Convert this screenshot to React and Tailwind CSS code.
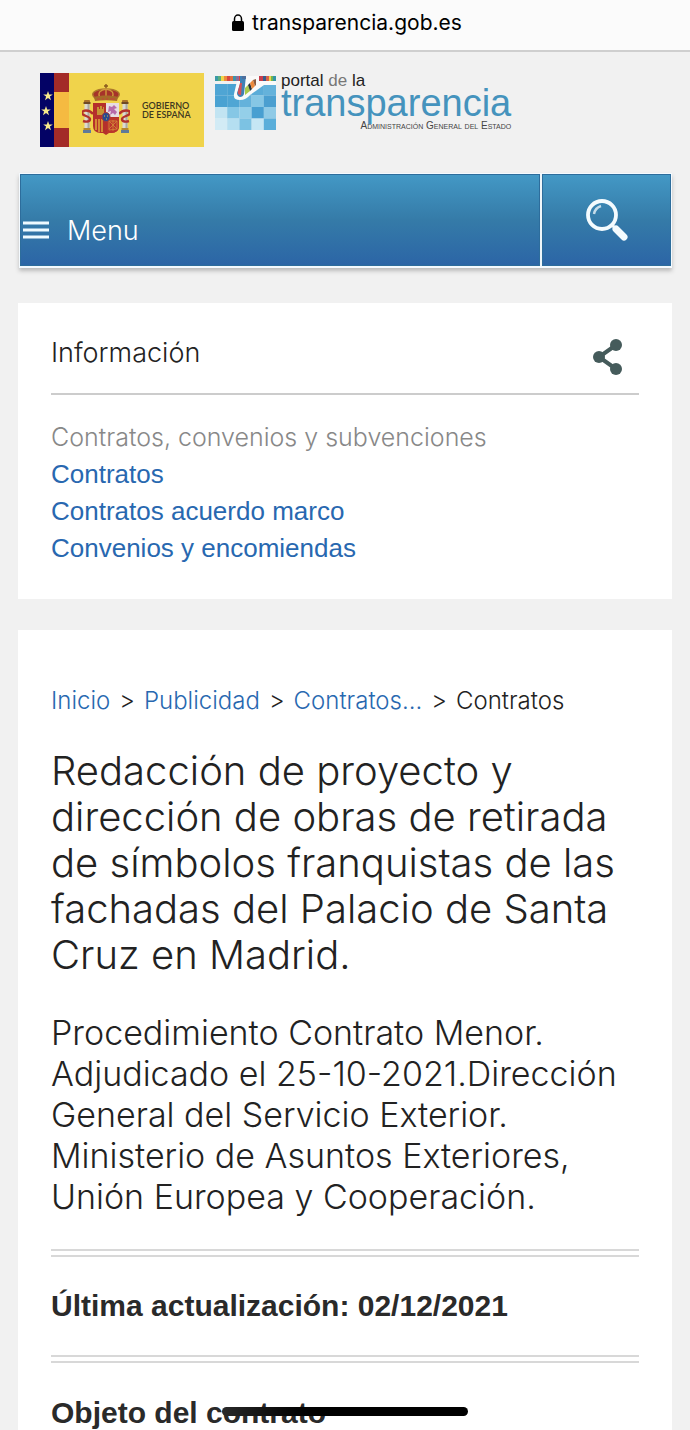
const relatedLinks = ["Contratos", "Contratos acuerdo marco", "Convenios y encomiendas"]

const breadcrumb = ["Inicio", "Publicidad", "Contratos..."]

const tiles = [
  ["#4fa5d4", "#4aa2d2", "#5aacd8", "#5aacd8", "#64b2db"],
  ["#4aa2d2", "#50a6d4", "#64b2db", "#86c7e5", "#4b9fd0"],
  ["#c2e4f2", "#86c7e5", "#94cfe9", "#489fd1", "#8fcae6"],
  ["#d2ebf5", "#b5dff1", "#7cc2e3", "#c5e6f4", "#5aaeda"],
]

const stripe = ["#3a9aa6", "#5cae7c", "#f0d548", "#ee8a3c", "#d8473f", "#e0703f", "#3d93a8", "#8a6d9b", "#d8473f"]

const Star = ({ x, y }) => (
  <path
    transform={`translate(${x} ${y})`}
    fill="#f8e98c"
    d="M0-5 1.2-1.6 4.8-1.6 1.9.6 3 4.2 0 2-3 4.2-1.9.6-4.8-1.6-1.2-1.6z"
  />
)

const CoatOfArms = () => (
  <svg viewBox="0 0 48 52" className="h-[52px] w-12" aria-hidden="true">
    {/* columns */}
    {[2, 40].map((x) => (
      <g key={x}>
        <rect x={x} y="16" width="6" height="3" rx="1" fill="#a8722a" />
        <rect x={x - 0.5} y="18" width="7" height="2" fill="#6f4a26" />
        <rect x={x + 0.5} y="20" width="5" height="24" fill="#dcdad0" />
        <rect x={x + 3.5} y="20" width="2" height="24" fill="#aaaaa4" />
        <rect x={x - 0.5} y="44" width="7" height="2" fill="#b5872e" />
        <rect x={x - 1} y="46" width="8" height="3" fill="#60799a" />
      </g>
    ))}
    {/* ribbons */}
    <path d="M11 30C7 25 0 26 0 29s8 3 8 6-4 3-7 2M37 30c4-5 11-4 11-1s-8 3-8 6 4 3 7 2" fill="none" stroke="#b3322c" strokeWidth="2.4" />
    {/* crown */}
    <path d="M24 0v5M22 2h4" stroke="#8a5a1e" strokeWidth="1.4" />
    <path d="M14 15C6 9 14 5 24 5s18 4 10 10z" fill="#a6332a" stroke="#ad782b" strokeWidth="1.5" />
    <path d="M18 14c-3-6 1-8 6-9 5 1 9 3 6 9M24 5v9" fill="none" stroke="#d09b3b" strokeWidth="1.4" />
    <path d="M12 13c7-2 17-2 24 0l-1 4c-7-1-15-1-22 0z" fill="#a66b28" />
    <path d="M15 15h3m2 0h2m2 0h2m2 0h5" stroke="#c8433a" strokeWidth="1" />
    {/* shield */}
    <path d="M11 19h26v23q0 7-8 7h-2l-3 2-3-2h-2q-8 0-8-7z" fill="#b5302b" />
    <path d="M24 19h13v14H24z" fill="#e6dce3" />
    <path d="M15 23h2v2h1v-3h2v3h1v-2h1v8h-7z" fill="#c79335" />
    <path d="M27 22l3 1 2-2 3 3-3 1 3 3-2 3-2-2-3 2 1-4-3 1z" fill="#b66aa9" />
    <path d="M14 35v11M17 35v13M20 35v13" stroke="#e1b13a" strokeWidth="1.4" />
    <path d="M25 34h12v8q0 7-8 7h-4z" fill="#bb352b" />
    <path d="M27 37h8v8l-8 1zM27 37l8 8m0-8-8 8m4-9v11" fill="none" stroke="#d38a39" strokeWidth="0.8" />
    <ellipse cx="24" cy="33" rx="4" ry="4.5" fill="#264b91" stroke="#a63d3b" />
    <path d="M22 32h1m2 0h1m-2 3h1" stroke="#d2b84e" />
  </svg>
)

const GovernmentLogo = () => (
  <a href="#gobierno" className="flex h-[74px] w-[164px] shrink-0 items-center bg-[#f0d34b]">
    <svg viewBox="0 0 29 74" className="h-full w-[29px]" aria-hidden="true">
      <rect width="14" height="74" fill="#030265" />
      <rect x="14" width="15" height="74" fill="#a32b28" />
      <rect x="14" y="19" width="15" height="36" fill="#f5ba41" />
      <Star x={8} y={23} />
      <Star x={6} y={38} />
      <Star x={8} y={53} />
    </svg>
    <span className="ml-[13px]"><CoatOfArms /></span>
    <span className="ml-3 font-[Lato] text-[9px] font-semibold leading-[9px] text-[#3d3820]">
      GOBIERNO<br />DE ESPAÑA
    </span>
  </a>
)

const PortalLogo = () => (
  <a href="#portal" className="flex items-start gap-[5px]">
    <svg viewBox="0 0 61 54" className="mt-[3px] h-[54px] w-[61px] shrink-0" aria-hidden="true">
      {tiles.map((row, r) =>
        row.map((fill, c) => (
          <rect key={`${r}-${c}`} x={c * 12.2} y={8 + r * 11.5} width="12.3" height="11.6" fill={fill} />
        ))
      )}
      <path d="M0 5h22l-3 13q-1 6 6 6 6 0 10-5l14-10h12V5H44V0H20v5z" fill="#fafafa" />
      {stripe.map((fill, i) => (
        <rect key={i} x={i * 3} width="3.1" height="5" fill={fill} />
      ))}
      {/* band folded into the ribbon */}
      <path d="M25 0h6l-1 9-1 9q-1 3-4 3-3-1-3-4l3-9z" fill="#3f80b5" />
      <path d="M25 7h2l-1 12q-4 0-3-4z" fill="#d05158" />
      <path d="M27 0h4v3h-4z" fill="#4f6f9c" />
      <path d="M30 12l3-3 2 6-5 4z" fill="#a8c94a" />
      <path d="M33 9l2-2 2 6-2 2z" fill="#24313a" />
      <path d="M35 7l3-3 2 6-3 3z" fill="#ee8a3c" />
      <path d="M38 4l3-1v6l-1 1z" fill="#8c5a3c" />
      <path d="M44 0h4v5h-4z" fill="#c83e4c" />
      <path d="M48 0h3v5h-3z" fill="#365c8b" />
      <path d="M51 0h3v5h-3z" fill="#d8624a" />
      <path d="M54 0h2v5h-2z" fill="#f0d548" />
      <path d="M56 0h2v5h-2z" fill="#72b451" />
      <path d="M58 0h3v5h-3z" fill="#3396a6" />
    </svg>
    <span className="flex flex-col">
      <span className="text-[17px] leading-[15px] text-[#222]">
        portal <span className="text-[#777]">de</span> la
      </span>
      <span className="text-[38px] leading-[30px] text-[#4593bd]">transparencia</span>
      <span className="mt-[2px] self-end text-[10px] leading-3 text-[#444] [font-variant:small-caps]">
        Administración General del Estado
      </span>
    </span>
  </a>
)

const SearchIcon = () => (
  <svg viewBox="0 0 42 42" className="h-[42px] w-[42px]" fill="none" stroke="#f4fbfe" aria-hidden="true">
    <circle cx="16" cy="16" r="14" strokeWidth="3.8" />
    <path d="M8 15q1-6 7-8" strokeWidth="2.4" opacity=".75" />
    <path d="M26 26l3 3" strokeWidth="3" />
    <path d="M30 30l8 8" strokeWidth="7" strokeLinecap="round" />
  </svg>
)

const ShareIcon = () => (
  <svg viewBox="0 0 30 36" className="h-9 w-[30px]" fill="#455b5b" aria-hidden="true">
    <path d="M23 6L6 18l17 12" fill="none" stroke="#455b5b" strokeWidth="4" />
    <circle cx="6" cy="18" r="6" />
    <circle cx="23" cy="6" r="6" />
    <circle cx="23" cy="30" r="6" />
  </svg>
)

const DoubleRule = () => <div className="h-2 border-y-2 border-[#d8d8d8]" />

const App = () => {
  return (
    <div className="min-h-screen bg-[#f1f1f1] font-['Liberation_Sans',sans-serif] text-[#222]">
      <header className="flex h-[52px] items-center justify-center gap-2 border-b-2 border-[#cfcfcf] bg-[#fbfbfb] pb-1 pl-1 text-black">
        <svg viewBox="0 0 12 18" className="h-[18px] w-3" aria-hidden="true">
          <rect y="7" width="12" height="10" rx="1.5" />
          <path d="M2.5 8V5a3.5 4 0 0 1 7 0v3" fill="none" stroke="#000" strokeWidth="1.5" />
        </svg>
        <span className="font-[Inter] text-[21px]">transparencia.gob.es</span>
      </header>

      <div className="flex items-start gap-[11px] pt-[21px] pl-10">
        <GovernmentLogo />
        <PortalLogo />
      </div>

      <nav className="mr-[18px] ml-[19px] mt-[26px] flex h-[95px] gap-[2px] border border-b-2 border-[#f4faff] bg-[#eef6fa] shadow-[0_3px_4px_#bbb]">
        <button className="flex flex-1 items-center gap-[18px] border border-[#2d6d9c] bg-linear-to-b from-[#4398c5] via-[#357ba8] to-[#2c65a6] pt-[22px] pl-[2px] text-white">
          <svg viewBox="0 0 26 20" className="h-5 w-[26px]" stroke="#eefaff" strokeWidth="3" aria-hidden="true">
            <path d="M0 2h26M0 9h26M0 16h26" />
          </svg>
          <span className="font-[Inter] text-[27px] font-light">Menu</span>
        </button>
        <button aria-label="Buscar" className="flex w-[129px] items-center justify-center border border-[#2d6d9c] bg-linear-to-b from-[#4398c5] via-[#357ba8] to-[#2c65a6]">
          <SearchIcon />
        </button>
      </nav>

      <section className="mx-[18px] mt-[35px] bg-white px-[33px] pt-7 pb-8">
        <div className="flex items-start justify-between border-b-2 border-[#ccc] pr-4 pb-[18px]">
          <h2 className="font-[Inter] text-[27px] leading-[44px] font-light">Información</h2>
          <button aria-label="Compartir" className="mt-2">
            <ShareIcon />
          </button>
        </div>
        <p className="mt-6 font-[Inter] text-[25px] leading-[37px] font-light text-[#888]">
          Contratos, convenios y subvenciones
        </p>
        <ul className="text-[26px] leading-[37px] text-[#2868b0]">
          {relatedLinks.map((link) => (
            <li key={link}><a href="#contratos">{link}</a></li>
          ))}
        </ul>
      </section>

      <main className="mx-[18px] mt-[31px] bg-white px-[33px] pt-[53px]">
        <div className="flex gap-[9px] font-[Inter] text-[24px] leading-9 font-light">
          {breadcrumb.map((item) => (
            <span key={item} className="flex gap-[9px]">
              <a href="#inicio" className="text-[#2868b0]">{item}</a>
              <span>&gt;</span>
            </span>
          ))}
          <span>Contratos</span>
        </div>
        <h1 className="mt-[29px] font-[Inter] text-[40px] leading-[46px] font-light">
          Redacción de proyecto y dirección de obras de retirada de símbolos franquistas de las fachadas del Palacio de Santa Cruz en Madrid.
        </h1>
        <p className="mt-[34px] mb-8 font-[Inter] text-[34px] leading-[41px] font-light">
          Procedimiento Contrato Menor. Adjudicado el 25-10-2021.Dirección General del Servicio Exterior. Ministerio de Asuntos Exteriores, Unión Europea y Cooperación.
        </p>
        <DoubleRule />
        <p className="py-8 text-[30px] leading-[34px] font-bold text-[#2a2a2a]">
          Última actualización: 02/12/2021
        </p>
        <DoubleRule />
        <h3 className="pt-[33px] text-[30px] leading-[34px] font-bold text-[#2a2a2a]">Objeto del contrato</h3>
      </main>

      <div className="fixed bottom-[14px] left-1/2 h-[9px] w-[246px] -translate-x-1/2 rounded-full bg-linear-to-r from-[#2a2a2a] via-black to-black" />
    </div>
  )
}

export default App
